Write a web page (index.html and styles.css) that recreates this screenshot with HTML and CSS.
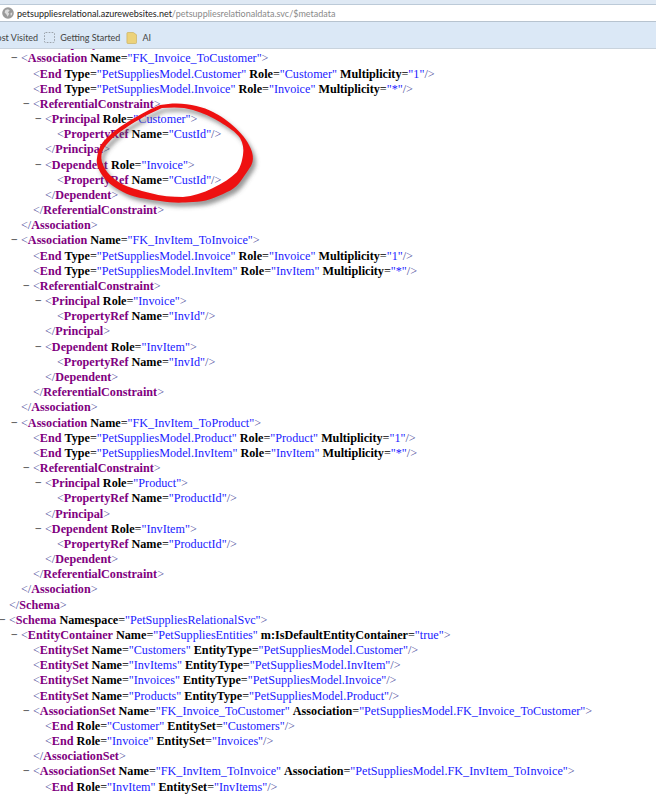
FILE: index.html
```html
<!DOCTYPE html>
<html lang="en">
<head>
<meta charset="utf-8">
<title>metadata</title>
<link rel="stylesheet" href="styles.css">
</head>
<body>
<header class="chrome">
  <div class="stripe"></div>
  <div class="address">
    <svg class="globe" width="12" height="12" viewBox="0 0 14 14"><circle cx="7" cy="7" r="6.8" fill="#9a9a9a"/><path d="M4 3.5 L7 2.5 L9 4 L7 6 L8.5 8 L6.5 11.5 L5 8.5 L3 6.5Z" fill="#dcdcdc"/><path d="M10 7 L12 6.5 L11.5 9.5 L10 10Z" fill="#dcdcdc"/></svg>
    <span class="host">petsuppliesrelational.azurewebsites.net</span><span class="path">/petsuppliesrelationaldata.svc/$metadata</span>
  </div>
  <div class="bookmarks">
    <span class="mark clipped">Most Visited</span>
    <svg class="dashed" width="11" height="11" viewBox="0 0 13 13"><rect x="0.5" y="0.5" width="12" height="12" rx="1.5" fill="none" stroke="#8a8f96" stroke-dasharray="2 1.5"/></svg>
    <span class="mark">Getting Started</span>
    <svg class="folder" width="11" height="12" viewBox="0 0 12 13"><path d="M1 1.5 Q1 0.5 2 0.5 L8 0.5 L11.5 3 L11.5 11.5 Q11.5 12.5 10.5 12.5 L2 12.5 Q1 12.5 1 11.5Z" fill="#ecd27a" stroke="#c8ae5a" stroke-width="0.7"/></svg>
    <span class="mark">AI</span>
  </div>
</header>
<main class="xml">
  <div class="line l3 cut"><b class="t">&lt;PropertyRef</b></div>
  <div class="line l1"><i class="m">−</i><s>&lt;</s><b class="t">Association</b> <b>Name</b>=<span class="v">"FK_Invoice_ToCustomer"</span><s>&gt;</s></div>
  <div class="line l2"><s>&lt;</s><b class="t">End</b> <b>Type</b>=<span class="v">"PetSuppliesModel.Customer"</span> <b>Role</b>=<span class="v">"Customer"</span> <b>Multiplicity</b>=<span class="v">"1"</span><s>/&gt;</s></div>
  <div class="line l2"><s>&lt;</s><b class="t">End</b> <b>Type</b>=<span class="v">"PetSuppliesModel.Invoice"</span> <b>Role</b>=<span class="v">"Invoice"</span> <b>Multiplicity</b>=<span class="v">"*"</span><s>/&gt;</s></div>
  <div class="line l2"><i class="m">−</i><s>&lt;</s><b class="t">ReferentialConstraint</b><s>&gt;</s></div>
  <div class="line l3"><i class="m">−</i><s>&lt;</s><b class="t">Principal</b> <b>Role</b>=<span class="v">"Customer"</span><s>&gt;</s></div>
  <div class="line l4"><s>&lt;</s><b class="t">PropertyRef</b> <b>Name</b>=<span class="v">"CustId"</span><s>/&gt;</s></div>
  <div class="line l3"><s>&lt;/</s><b class="t">Principal</b><s>&gt;</s></div>
  <div class="line l3"><i class="m">−</i><s>&lt;</s><b class="t">Dependent</b> <b>Role</b>=<span class="v">"Invoice"</span><s>&gt;</s></div>
  <div class="line l4"><s>&lt;</s><b class="t">PropertyRef</b> <b>Name</b>=<span class="v">"CustId"</span><s>/&gt;</s></div>
  <div class="line l3"><s>&lt;/</s><b class="t">Dependent</b><s>&gt;</s></div>
  <div class="line l2"><s>&lt;/</s><b class="t">ReferentialConstraint</b><s>&gt;</s></div>
  <div class="line l1"><s>&lt;/</s><b class="t">Association</b><s>&gt;</s></div>
  <div class="line l1"><i class="m">−</i><s>&lt;</s><b class="t">Association</b> <b>Name</b>=<span class="v">"FK_InvItem_ToInvoice"</span><s>&gt;</s></div>
  <div class="line l2"><s>&lt;</s><b class="t">End</b> <b>Type</b>=<span class="v">"PetSuppliesModel.Invoice"</span> <b>Role</b>=<span class="v">"Invoice"</span> <b>Multiplicity</b>=<span class="v">"1"</span><s>/&gt;</s></div>
  <div class="line l2"><s>&lt;</s><b class="t">End</b> <b>Type</b>=<span class="v">"PetSuppliesModel.InvItem"</span> <b>Role</b>=<span class="v">"InvItem"</span> <b>Multiplicity</b>=<span class="v">"*"</span><s>/&gt;</s></div>
  <div class="line l2"><i class="m">−</i><s>&lt;</s><b class="t">ReferentialConstraint</b><s>&gt;</s></div>
  <div class="line l3"><i class="m">−</i><s>&lt;</s><b class="t">Principal</b> <b>Role</b>=<span class="v">"Invoice"</span><s>&gt;</s></div>
  <div class="line l4"><s>&lt;</s><b class="t">PropertyRef</b> <b>Name</b>=<span class="v">"InvId"</span><s>/&gt;</s></div>
  <div class="line l3"><s>&lt;/</s><b class="t">Principal</b><s>&gt;</s></div>
  <div class="line l3"><i class="m">−</i><s>&lt;</s><b class="t">Dependent</b> <b>Role</b>=<span class="v">"InvItem"</span><s>&gt;</s></div>
  <div class="line l4"><s>&lt;</s><b class="t">PropertyRef</b> <b>Name</b>=<span class="v">"InvId"</span><s>/&gt;</s></div>
  <div class="line l3"><s>&lt;/</s><b class="t">Dependent</b><s>&gt;</s></div>
  <div class="line l2"><s>&lt;/</s><b class="t">ReferentialConstraint</b><s>&gt;</s></div>
  <div class="line l1"><s>&lt;/</s><b class="t">Association</b><s>&gt;</s></div>
  <div class="line l1"><i class="m">−</i><s>&lt;</s><b class="t">Association</b> <b>Name</b>=<span class="v">"FK_InvItem_ToProduct"</span><s>&gt;</s></div>
  <div class="line l2"><s>&lt;</s><b class="t">End</b> <b>Type</b>=<span class="v">"PetSuppliesModel.Product"</span> <b>Role</b>=<span class="v">"Product"</span> <b>Multiplicity</b>=<span class="v">"1"</span><s>/&gt;</s></div>
  <div class="line l2"><s>&lt;</s><b class="t">End</b> <b>Type</b>=<span class="v">"PetSuppliesModel.InvItem"</span> <b>Role</b>=<span class="v">"InvItem"</span> <b>Multiplicity</b>=<span class="v">"*"</span><s>/&gt;</s></div>
  <div class="line l2"><i class="m">−</i><s>&lt;</s><b class="t">ReferentialConstraint</b><s>&gt;</s></div>
  <div class="line l3"><i class="m">−</i><s>&lt;</s><b class="t">Principal</b> <b>Role</b>=<span class="v">"Product"</span><s>&gt;</s></div>
  <div class="line l4"><s>&lt;</s><b class="t">PropertyRef</b> <b>Name</b>=<span class="v">"ProductId"</span><s>/&gt;</s></div>
  <div class="line l3"><s>&lt;/</s><b class="t">Principal</b><s>&gt;</s></div>
  <div class="line l3"><i class="m">−</i><s>&lt;</s><b class="t">Dependent</b> <b>Role</b>=<span class="v">"InvItem"</span><s>&gt;</s></div>
  <div class="line l4"><s>&lt;</s><b class="t">PropertyRef</b> <b>Name</b>=<span class="v">"ProductId"</span><s>/&gt;</s></div>
  <div class="line l3"><s>&lt;/</s><b class="t">Dependent</b><s>&gt;</s></div>
  <div class="line l2"><s>&lt;/</s><b class="t">ReferentialConstraint</b><s>&gt;</s></div>
  <div class="line l1"><s>&lt;/</s><b class="t">Association</b><s>&gt;</s></div>
  <div class="line l0"><s>&lt;/</s><b class="t">Schema</b><s>&gt;</s></div>
  <div class="line l0"><i class="m">−</i><s>&lt;</s><b class="t">Schema</b> <b>Namespace</b>=<span class="v">"PetSuppliesRelationalSvc"</span><s>&gt;</s></div>
  <div class="line l1"><i class="m">−</i><s>&lt;</s><b class="t">EntityContainer</b> <b>Name</b>=<span class="v">"PetSuppliesEntities"</span> <b>m:IsDefaultEntityContainer</b>=<span class="v">"true"</span><s>&gt;</s></div>
  <div class="line l2"><s>&lt;</s><b class="t">EntitySet</b> <b>Name</b>=<span class="v">"Customers"</span> <b>EntityType</b>=<span class="v">"PetSuppliesModel.Customer"</span><s>/&gt;</s></div>
  <div class="line l2"><s>&lt;</s><b class="t">EntitySet</b> <b>Name</b>=<span class="v">"InvItems"</span> <b>EntityType</b>=<span class="v">"PetSuppliesModel.InvItem"</span><s>/&gt;</s></div>
  <div class="line l2"><s>&lt;</s><b class="t">EntitySet</b> <b>Name</b>=<span class="v">"Invoices"</span> <b>EntityType</b>=<span class="v">"PetSuppliesModel.Invoice"</span><s>/&gt;</s></div>
  <div class="line l2"><s>&lt;</s><b class="t">EntitySet</b> <b>Name</b>=<span class="v">"Products"</span> <b>EntityType</b>=<span class="v">"PetSuppliesModel.Product"</span><s>/&gt;</s></div>
  <div class="line l2"><i class="m">−</i><s>&lt;</s><b class="t">AssociationSet</b> <b>Name</b>=<span class="v">"FK_Invoice_ToCustomer"</span> <b>Association</b>=<span class="v">"PetSuppliesModel.FK_Invoice_ToCustomer"</span><s>&gt;</s></div>
  <div class="line l3"><s>&lt;</s><b class="t">End</b> <b>Role</b>=<span class="v">"Customer"</span> <b>EntitySet</b>=<span class="v">"Customers"</span><s>/&gt;</s></div>
  <div class="line l3"><s>&lt;</s><b class="t">End</b> <b>Role</b>=<span class="v">"Invoice"</span> <b>EntitySet</b>=<span class="v">"Invoices"</span><s>/&gt;</s></div>
  <div class="line l2"><s>&lt;/</s><b class="t">AssociationSet</b><s>&gt;</s></div>
  <div class="line l2"><i class="m">−</i><s>&lt;</s><b class="t">AssociationSet</b> <b>Name</b>=<span class="v">"FK_InvItem_ToInvoice"</span> <b>Association</b>=<span class="v">"PetSuppliesModel.FK_InvItem_ToInvoice"</span><s>&gt;</s></div>
  <div class="line l3"><s>&lt;</s><b class="t">End</b> <b>Role</b>=<span class="v">"InvItem"</span> <b>EntitySet</b>=<span class="v">"InvItems"</span><s>/&gt;</s></div>
  <svg class="scribble" width="190" height="130" viewBox="0 0 190 130">
    <defs><filter id="sh" x="-10%" y="-10%" width="130%" height="130%"><feGaussianBlur stdDeviation="2"/></filter></defs>
    <path class="ring-shadow" fill-rule="evenodd" filter="url(#sh)" transform="translate(3 4)" d="M70 10 C90 6 110 10 123 17 C137 24 157 40 162 57 C165 68 160 72 157 77 C150 87 147 93 137 97 C125 103 115 107 103 107 C90 108 82 108 70 106 C55 104 42 102 33 97 C23 92 16 86 12 80 C8 74 6 68 7 63 C8 57 9 52 13 47 C20 39 27 34 33 30 C45 22 58 15 70 10 Z M72 13 C84 12 94 12 103 15 C113 18 122 22 130 27 C138 32 146 37 150 43 C153 48 154 54 153 60 C152 66 151 71 147 77 C141 83 133 88 123 93 C113 98 103 101 93 102 C82 102 71 101 60 98 C49 95 39 93 30 88 C22 83 16 77 13 70 C11 66 11 61 12 57 C15 50 22 43 30 37 C42 28 58 19 72 13 Z"/>
    <path class="ring" fill-rule="evenodd" d="M70 10 C90 6 110 10 123 17 C137 24 157 40 162 57 C165 68 160 72 157 77 C150 87 147 93 137 97 C125 103 115 107 103 107 C90 108 82 108 70 106 C55 104 42 102 33 97 C23 92 16 86 12 80 C8 74 6 68 7 63 C8 57 9 52 13 47 C20 39 27 34 33 30 C45 22 58 15 70 10 Z M72 13 C84 12 94 12 103 15 C113 18 122 22 130 27 C138 32 146 37 150 43 C153 48 154 54 153 60 C152 66 151 71 147 77 C141 83 133 88 123 93 C113 98 103 101 93 102 C82 102 71 101 60 98 C49 95 39 93 30 88 C22 83 16 77 13 70 C11 66 11 61 12 57 C15 50 22 43 30 37 C42 28 58 19 72 13 Z"/>
  </svg>
</main>
</body>
</html>
```

FILE: styles.css
```css
html, body {
  margin: 0;
  padding: 0;
  background: #fff;
}
body {
  width: 656px;
  height: 795px;
  overflow: hidden;
}
.chrome {
  position: relative;
  z-index: 1;
  height: 49px;
  display: flex;
  flex-direction: column;
  background: #dbe8f6;
  border-bottom: 1px solid #c9d3dd;
  box-sizing: border-box;
  font-family: Lato, "Noto Sans", sans-serif;
  font-size: 9px;
  color: #444;
}
.stripe {
  height: 5px;
  flex: none;
  box-sizing: border-box;
  background: #dfe9f4;
  border-bottom: 1px solid #bccad8;
}
.address {
  height: 17px;
  flex: none;
  display: flex;
  align-items: center;
  background: #fff;
  border-bottom: 1px solid #b7c3cf;
  padding-left: 2px;
  white-space: nowrap;
  box-sizing: border-box;
}
.globe {
  margin-right: 3px;
  flex: none;
}
.host {
  color: #222;
}
.path {
  color: #8a8a8a;
}
.bookmarks {
  flex: 1;
  display: flex;
  align-items: center;
  white-space: nowrap;
  padding-top: 5px;
}
.clipped {
  margin-left: -11.6px;
}
.dashed {
  margin: 0 5px 0 6px;
}
.folder {
  margin: 0 5px 0 6px;
}
.xml {
  position: relative;
  height: 746px;
  overflow: hidden;
  font-family: "Liberation Serif", "Times New Roman", serif;
  font-size: 12.17px;
  line-height: 15.18px;
  color: #000;
}
.line {
  position: relative;
  white-space: nowrap;
  height: 15.18px;
}
.cut {
  margin-top: -12.8px;
}
.l0 { padding-left: 9px; }
.l1 { padding-left: 21px; }
.l2 { padding-left: 33px; }
.l3 { padding-left: 45px; }
.l4 { padding-left: 57px; }
.line i.m {
  font-style: normal;
  position: absolute;
  margin-left: -10px;
  color: #000;
}
.line s {
  text-decoration: none;
  color: #4a4a9a;
}
.line b {
  font-weight: bold;
}
.line b.t {
  color: #800080;
}
.v {
  color: #1a1aff;
}
.scribble {
  position: absolute;
  left: 90px;
  top: 46px;
  pointer-events: none;
}
.ring {
  fill: #ee1111;
}
.ring-shadow {
  fill: #555;
  fill-opacity: 0.6;
}
```
